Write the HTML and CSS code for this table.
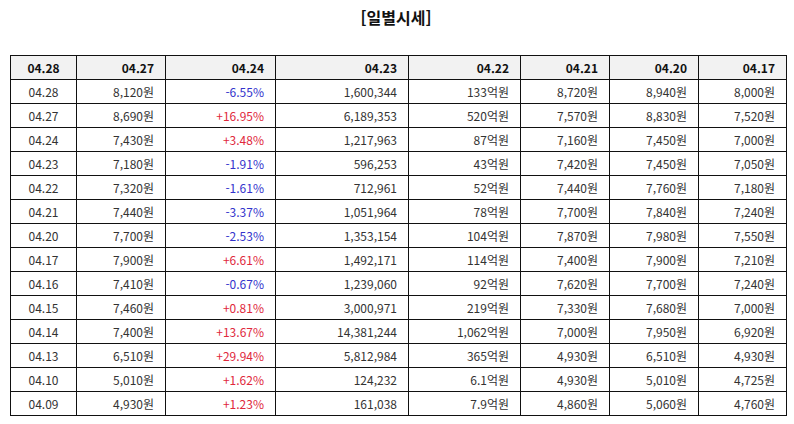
FILE: index.html
```html
<!DOCTYPE html>
<html lang="ko">
<head>
<meta charset="utf-8">
<title>일별시세</title>
<link rel="stylesheet" href="styles.css">
</head>
<body>
<div class="page">
  <h1 class="title">[일별시세]</h1>
  <table class="quotes">
    <colgroup>
      <col class="c1"><col class="c2"><col class="c3"><col class="c4"><col class="c5"><col class="c6"><col class="c7"><col class="c8">
    </colgroup>
    <thead>
      <tr><th>04.28</th><th>04.27</th><th>04.24</th><th>04.23</th><th>04.22</th><th>04.21</th><th>04.20</th><th>04.17</th></tr>
    </thead>
    <tbody>
      <tr><td>04.28</td><td>8,120원</td><td class="down">-6.55%</td><td>1,600,344</td><td>133억원</td><td>8,720원</td><td>8,940원</td><td>8,000원</td></tr>
      <tr><td>04.27</td><td>8,690원</td><td class="up">+16.95%</td><td>6,189,353</td><td>520억원</td><td>7,570원</td><td>8,830원</td><td>7,520원</td></tr>
      <tr><td>04.24</td><td>7,430원</td><td class="up">+3.48%</td><td>1,217,963</td><td>87억원</td><td>7,160원</td><td>7,450원</td><td>7,000원</td></tr>
      <tr><td>04.23</td><td>7,180원</td><td class="down">-1.91%</td><td>596,253</td><td>43억원</td><td>7,420원</td><td>7,450원</td><td>7,050원</td></tr>
      <tr><td>04.22</td><td>7,320원</td><td class="down">-1.61%</td><td>712,961</td><td>52억원</td><td>7,440원</td><td>7,760원</td><td>7,180원</td></tr>
      <tr><td>04.21</td><td>7,440원</td><td class="down">-3.37%</td><td>1,051,964</td><td>78억원</td><td>7,700원</td><td>7,840원</td><td>7,240원</td></tr>
      <tr><td>04.20</td><td>7,700원</td><td class="down">-2.53%</td><td>1,353,154</td><td>104억원</td><td>7,870원</td><td>7,980원</td><td>7,550원</td></tr>
      <tr><td>04.17</td><td>7,900원</td><td class="up">+6.61%</td><td>1,492,171</td><td>114억원</td><td>7,400원</td><td>7,900원</td><td>7,210원</td></tr>
      <tr><td>04.16</td><td>7,410원</td><td class="down">-0.67%</td><td>1,239,060</td><td>92억원</td><td>7,620원</td><td>7,700원</td><td>7,240원</td></tr>
      <tr><td>04.15</td><td>7,460원</td><td class="up">+0.81%</td><td>3,000,971</td><td>219억원</td><td>7,330원</td><td>7,680원</td><td>7,000원</td></tr>
      <tr><td>04.14</td><td>7,400원</td><td class="up">+13.67%</td><td>14,381,244</td><td>1,062억원</td><td>7,000원</td><td>7,950원</td><td>6,920원</td></tr>
      <tr><td>04.13</td><td>6,510원</td><td class="up">+29.94%</td><td>5,812,984</td><td>365억원</td><td>4,930원</td><td>6,510원</td><td>4,930원</td></tr>
      <tr><td>04.10</td><td>5,010원</td><td class="up">+1.62%</td><td>124,232</td><td>6.1억원</td><td>4,930원</td><td>5,010원</td><td>4,725원</td></tr>
      <tr><td>04.09</td><td>4,930원</td><td class="up">+1.23%</td><td>161,038</td><td>7.9억원</td><td>4,860원</td><td>5,060원</td><td>4,760원</td></tr>
    </tbody>
  </table>
</div>
</body>
</html>
```

FILE: styles.css
```css
html, body {
  margin: 0;
  padding: 0;
  background: #ffffff;
}

body {
  font-family: "Noto Sans CJK KR", "Noto Sans", sans-serif;
  color: #333333;
}

.page {
  padding: 5px 10px 0 10px;
}

.title {
  margin: 0;
  text-align: center;
  font-size: 16px;
  font-weight: bold;
  color: #111111;
  line-height: 24px;
  height: 24px;
  padding-right: 2px;
}

.quotes {
  margin-top: 26px;
  width: 776px;
  border-collapse: collapse;
  table-layout: fixed;
  font-size: 12px;
}

.c1 { width: 66px; }
.c2 { width: 89px; }
.c3 { width: 110px; }
.c4 { width: 133px; }
.c5 { width: 112px; }
.c6 { width: 89px; }
.c7 { width: 89px; }
.c8 { width: 88px; }

.quotes th,
.quotes td {
  border: 1px solid #111111;
  height: 23px;
  padding: 0 11px 0 4px;
  text-align: right;
  line-height: 23px;
  white-space: nowrap;
}

.quotes th {
  background: #f2f2f2;
  font-weight: bold;
  color: #111111;
}

.quotes th:first-child,
.quotes td:first-child {
  text-align: center;
  padding: 0;
}

.quotes td {
  color: #333333;
}

.quotes td.up {
  color: #e0283c;
}

.quotes td.down {
  color: #3333cc;
}
```
